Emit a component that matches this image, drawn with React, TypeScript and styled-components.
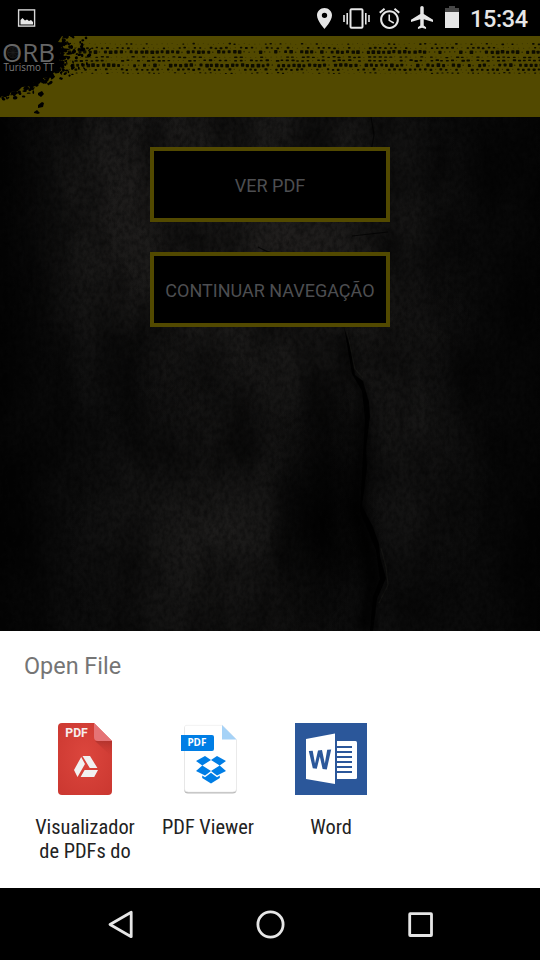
import React from "react";
import styled, { createGlobalStyle } from "styled-components";

const GlobalStyle = createGlobalStyle`
  * { box-sizing: border-box; }
  html, body { margin: 0; padding: 0; background: #000; }
`;

const Screen = styled.div`
  width: 540px;
  height: 960px;
  display: flex;
  flex-direction: column;
  overflow: hidden;
  background: #000;
  font-family: Roboto, "Liberation Sans", sans-serif;
`;

const StatusBar = styled.header`
  height: 36px;
  flex: none;
  display: flex;
  align-items: flex-start;
  justify-content: space-between;
  padding: 0 13px 0 17px;
`;

const StatusIcons = styled.div`
  display: flex;
  align-items: flex-start;
`;

const Glyph = styled.svg<{ $top: number; $right?: number }>`
  display: block;
  flex: none;
  margin-top: ${(p) => p.$top}px;
  margin-right: ${(p) => p.$right ?? 0}px;
`;

const Clock = styled.span`
  width: 57px;
  height: 36px;
  font-size: 23.5px;
  font-weight: 500;
  line-height: 38px;
  letter-spacing: -0.35px;
  color: #e6e6e6;
  white-space: nowrap;
`;

const Banner = styled.div`
  height: 81px;
  flex: none;
  background: #524900;
`;

const Art = styled.svg`
  display: block;
`;

const Stage = styled.main`
  flex: 1;
  min-height: 0;
  display: grid;
  grid-template: 514px / 540px;
  > * { grid-area: 1 / 1; }
`;

const Actions = styled.div`
  display: flex;
  flex-direction: column;
  align-items: center;
  gap: 30px;
  padding-top: 30px;
  z-index: 1;
`;

const ActionButton = styled.button`
  width: 240px;
  height: 75px;
  padding: 2px 0 0;
  border: 4px solid #524900;
  background: #000;
  color: #4d4e51;
  font: 400 18px Roboto, "Liberation Sans", sans-serif;
  white-space: nowrap;
`;

const Sheet = styled.section`
  height: 257px;
  flex: none;
  background: #fff;
  padding: 20px 23px 0;
`;

const SheetTitle = styled.h1`
  margin: 0 1px;
  height: 30px;
  font-size: 23.4px;
  line-height: 30px;
  font-weight: 400;
  color: #757575;
`;

const AppGrid = styled.div`
  display: grid;
  grid-template-columns: repeat(4, 123px);
  margin-top: 42px;
`;

const AppItem = styled.div`
  display: flex;
  flex-direction: column;
  align-items: center;
  gap: 20px;
`;

const AppLabel = styled.span`
  width: 123px;
  padding-left: 1px;
  font-family: "Roboto Condensed", Roboto, "Liberation Sans", sans-serif;
  font-stretch: 75%;
  font-size: 20.4px;
  line-height: 24px;
  text-align: center;
  color: #222;
  white-space: pre;
`;

const NavBar = styled.nav`
  height: 72px;
  flex: none;
  display: flex;
  justify-content: center;
  align-items: center;
  gap: 110px;
`;

const makeRandom = (start: number) => {
  let s = start;
  return () => {
    s = (s * 16807) % 2147483647;
    return s / 2147483647;
  };
};

type Mark = { x: number; y: number; w: number; h: number; o: number };

const TREAD_ROWS = [
  { y: 8, w: 2.6, h: 1.6, fade: 0.65, phase: 0.7 },
  { y: 12, w: 2.8, h: 1.9, fade: 0.35, phase: 2.2 },
  { y: 16, w: 3.5, h: 3.5, fade: 0.2, phase: 0 },
  { y: 21.2, w: 3.4, h: 1.5, fade: 0.3, phase: 1.6 },
  { y: 24.6, w: 3.4, h: 1.8, fade: 0.22, phase: 1.6 },
  { y: 29.4, w: 3.5, h: 3.6, fade: 0.17, phase: 3 },
  { y: 33.6, w: 2.9, h: 2.3, fade: 0.22, phase: 1 },
  { y: 37, w: 2.4, h: 1.2, fade: 0.45, phase: 2.5 },
];

const treadMarks = (): Mark[] => {
  const rnd = makeRandom(731);
  const marks: Mark[] = [];
  TREAD_ROWS.forEach((row, r) => {
    for (let x = 68 + row.phase; x < 541; x += 5.15) {
      const wave = Math.sin(x / 29 + r * 1.9) + Math.sin(x / 67 + r);
      const worn = rnd() < row.fade + (wave > 1.1 ? 0.35 : 0);
      const k = worn ? 0.45 : 0.8 + rnd() * 0.25;
      marks.push({
        x: x + (rnd() - 0.5) * 0.8,
        y: row.y - (row.h * k) / 2 + (rnd() - 0.5) * 0.8,
        w: row.w * k,
        h: row.h * k,
        o: worn ? 0.5 : 0.9,
      });
    }
  });
  return marks;
};

const splatter = () => {
  const rnd = makeRandom(97);
  const edge = [[64, 0], [60, 12], [60, 20], [61, 30], [53, 38], [42, 44], [30, 49], [17, 56], [0, 60]];
  const blobs: { x: number; y: number; rx: number; ry: number; a: number }[] = [];
  for (let i = 0; i < edge.length - 1; i++) {
    const [x1, y1] = edge[i];
    const [x2, y2] = edge[i + 1];
    for (let j = 0; j < (i < 4 ? 26 : 18); j++) {
      const t = rnd();
      const d = rnd() * rnd() * (i < 4 ? 36 : 12);
      blobs.push({
        x: x1 + (x2 - x1) * t + d * (i < 4 ? 1 : 0.4),
        y: y1 + (y2 - y1) * t + (i < 4 ? (rnd() - 0.5) * 7 : d * 0.6),
        rx: 0.6 + rnd() * 1.9,
        ry: 0.6 + rnd() * 1.2,
        a: -50 + rnd() * 60,
      });
    }
  }
  return blobs;
};

const MARKS = treadMarks();
const BLOBS = splatter();

const BannerArt = () => (
  <Art width="540" height="81" viewBox="0 0 540 81">
    {MARKS.map((m, i) => (
      <rect key={i} x={m.x} y={m.y} width={m.w} height={m.h} rx="0.7" fill="#060500" opacity={m.o} />
    ))}
    <path d="M0 0H62L58 6L67 7L61 12L71 13L60 17L66 21L59 24L65 28L58 32L62 34L53 37L55 41L43 42L44 46L34 46L32 50L22 51L18 55L11 56L9 60L3 59L0 62Z" fill="#000" />
    {BLOBS.map((b, i) => (
      <ellipse key={i} cx={b.x} cy={b.y} rx={b.rx} ry={b.ry} transform={`rotate(${b.a} ${b.x} ${b.y})`} fill="#000" />
    ))}
    <path d="M38 57l4-2 2 3-3 3-3-2zM38 69l4-3 2 1-1 4-5 1zM34 76l3-2 3 3-2 1-4-1zM60 41l3 1-1 2-3-1z" fill="#000" />
    <circle cx="13" cy="16.5" r="5.5" fill="#0c0c0c" stroke="#191919" strokeWidth="1" />
    <path d="M8 16.5H18M13 11.5V21.5M10 13.5L16 19.5M16 13.5L10 19.5" stroke="#202020" strokeWidth=".7" />
    <text x="2" y="25.8" textLength="53" lengthAdjust="spacingAndGlyphs" fontFamily="Open Sans, Noto Sans, sans-serif" fontSize="25" fill="#666">ORB</text>
    <text x="3.5" y="35.2" textLength="50.5" lengthAdjust="spacingAndGlyphs" fontFamily="Open Sans, Noto Sans, sans-serif" fontSize="10.2" fill="#7a7a7a">Turismo TT</text>
  </Art>
);

const StoneWall = () => (
  <Art width="540" height="514" viewBox="0 0 540 514" colorInterpolationFilters="sRGB">
    <defs>
      <filter id="grain" x="0" y="0" width="100%" height="100%">
        <feTurbulence type="fractalNoise" baseFrequency="0.24 0.17" numOctaves="3" seed="8" />
        <feColorMatrix values="0 0 0 0 0  0 0 0 0 0  0 0 0 0 0  2 0 0 0 -0.7" />
      </filter>
      <filter id="patches" x="0" y="0" width="100%" height="100%">
        <feTurbulence type="fractalNoise" baseFrequency="0.02 0.011" numOctaves="5" seed="21" />
        <feColorMatrix values="0 0 0 0 0  0 0 0 0 0  0 0 0 0 0  2.2 0 0 0 -0.8" />
      </filter>
      <filter id="slightBlur" x="-50%" y="-10%" width="200%" height="120%"><feGaussianBlur stdDeviation="5" /></filter>
      <radialGradient id="glowTop"><stop offset="0" stopColor="#211f1e" /><stop offset=".5" stopColor="#1c1b1a" stopOpacity=".8" /><stop offset="1" stopColor="#181716" stopOpacity="0" /></radialGradient>
      <radialGradient id="glowLow"><stop offset="0" stopColor="#1f1e1d" /><stop offset="1" stopColor="#151413" stopOpacity="0" /></radialGradient>
      <radialGradient id="shade"><stop offset="0" stopColor="#030303" /><stop offset="1" stopColor="#030303" stopOpacity="0" /></radialGradient>
      <linearGradient id="sides">
        <stop offset="0" stopColor="#000" stopOpacity=".7" /><stop offset=".16" stopColor="#000" stopOpacity="0" />
        <stop offset=".78" stopColor="#000" stopOpacity="0" /><stop offset="1" stopColor="#000" stopOpacity=".65" />
      </linearGradient>
    </defs>
    <rect width="540" height="514" fill="#0f0f0f" />
    <ellipse cx="150" cy="80" rx="150" ry="230" fill="url(#glowTop)" />
    <ellipse cx="290" cy="130" rx="190" ry="240" fill="url(#glowTop)" />
    <ellipse cx="215" cy="420" rx="150" ry="190" fill="url(#glowLow)" />
    <ellipse cx="410" cy="320" rx="90" ry="190" fill="url(#glowLow)" opacity=".6" />
    <ellipse cx="325" cy="400" rx="60" ry="150" fill="url(#shade)" />
    <rect width="540" height="514" fill="url(#sides)" />
    <rect width="540" height="514" filter="url(#patches)" opacity=".5" />
    <path d="M344 210L355 258L366 269L369 300L366 331L362 389L378 427L384 461L376 482L373 514H356L365 470L350 390L360 320L358 280L340 230Z" fill="#000" opacity=".75" filter="url(#slightBlur)" />
    <path d="M344 210L350 229L355 258L363 264L369 285L370 300L366 331L367 350L362 389L373 410L379 427L380 440L386 461L377 482L373 514H370L373 480L380 462L376 433L360 394L363 340L365 302L362 274L352 257Z" fill="#000" opacity=".85" />
    <path d="M347 214L355 252L363 261M381 431L386 450L388 468L379 486" fill="none" stroke="#1b1a18" strokeWidth="1.2" opacity=".6" />
    <path d="M371 0L374 18L371 35M302 74L304 98M258 130C271 138 280 137 293 137M352 119L388 115M302 148C316 155 326 158 331 158M320 190Q343 174 359 173" fill="none" stroke="#020202" strokeWidth="1.2" opacity=".7" />
    <rect width="540" height="514" filter="url(#grain)" opacity=".4" />
  </Art>
);

const ICON = "#e6e6e6";

const DriveIcon = () => (
  <Art width="72" height="72" viewBox="0 0 72 72">
    <defs>
      <radialGradient id="red" cx=".5" cy=".45" r=".8">
        <stop offset="0" stopColor="#dc463d" /><stop offset="1" stopColor="#c9362f" />
      </radialGradient>
      <linearGradient id="foldShade" x1="0" y1="0" x2="0" y2="1">
        <stop offset="0" stopColor="#942b27" stopOpacity=".5" /><stop offset="1" stopColor="#c9362f" stopOpacity="0" />
      </linearGradient>
    </defs>
    <path d="M13 0H45L63 18V68Q63 72 59 72H13Q9 72 9 68V4Q9 0 13 0Z" fill="url(#red)" />
    <path d="M46 18H63V34Z" fill="url(#foldShade)" />
    <path d="M45 0L63 18H49Q45 18 45 14Z" fill="#e57376" />
    <text x="16.3" y="14.3" textLength="22.5" lengthAdjust="spacingAndGlyphs" fontFamily="Roboto, sans-serif" fontWeight="700" fontSize="12" fill="#f7eeee">PDF</text>
    <path d="M32.2 34L36 41L28.5 54L25 47ZM33.5 33H41L48.4 45H40.8ZM35.6 47H49L45.2 54H31.6Z" fill="#f1f1f1" />
  </Art>
);

const DropboxIcon = () => (
  <Art width="72" height="72" viewBox="0 0 72 72">
    <path d="M15 3H50.5L64.5 17V67Q64.5 70.5 60.5 70.5H16Q12.3 70.5 12.3 67V5Q12.3 3 15 3Z" fill="#bbb" />
    <path d="M15 2.3H50.5L64.5 16.5V66Q64.5 69 60.5 69H16.5Q12.5 69 12.5 66V4Q12.5 2.3 15 2.3Z" fill="#fff" stroke="#e8e8e8" strokeWidth=".6" />
    <path d="M50 2L64.5 16.5H50Z" fill="#a5d2f7" />
    <path d="M9 12H40Q42 12 42 14V26Q42 28 40 28H9Z" fill="#007ee5" />
    <text x="15.4" y="23" textLength="19" lengthAdjust="spacingAndGlyphs" fontFamily="Open Sans, sans-serif" fontWeight="700" fontSize="9.8" fill="#fff">PDF</text>
    <path d="M33 33L39 37L30.3 42.5L24 38ZM45 33L54 38L47.7 42.5L39 37ZM24 48L30.3 42.5L39 48L33 52.5ZM39 48L47.7 42.5L54 48L45 52.5ZM30.2 52.6L33 54.2L39 49.8L45 54.2L47.8 52.6V55L39 60.5L30.2 55Z" fill="#007ee5" />
  </Art>
);

const WordIcon = () => (
  <Art width="72" height="72" viewBox="0 0 72 72">
    <rect width="72" height="72" fill="#2b579a" />
    <path d="M11 16L40 10.5V61L11 56Z" fill="#fff" />
    <path d="M42 18H60.5Q62 18 62 19.5V54.5Q62 56 60.5 56H42Z" fill="#fff" />
    <path d="M42 24H57M42 29H57M42 34H57M42 39H57M42 44H57M42 49H57" stroke="#2b579a" strokeWidth="2" />
    <path d="M13.8 28L17.7 27.7L20 40.5L23 27.4L27 27L29.8 40.4L32.2 26.8L36.2 26.4L31.8 46.4L27.6 46.1L24.8 33.5L21.8 45.7L17.8 45.3Z" fill="#2b579a" />
  </Art>
);

const APPS = [
  { label: "Visualizador\nde PDFs do", Icon: DriveIcon },
  { label: "PDF Viewer", Icon: DropboxIcon },
  { label: "Word", Icon: WordIcon },
];

export default function App() {
  return (
    <>
      <GlobalStyle />
      <Screen>
        <StatusBar>
          <Glyph $top={9} width="19" height="18" viewBox="0 0 19 18">
            <rect x="1.6" y=".9" width="16" height="16.2" fill="none" stroke="#d8d8d8" strokeWidth="1.4" />
            <path d="M3.5 15.5V11L5.5 9L8 11.5L10 10.5L12 12L14 11L16 13V15.5Z" fill={ICON} />
          </Glyph>
          <StatusIcons>
            <Glyph $top={8} $right={11} width="15" height="21" viewBox="5 2 14 20" preserveAspectRatio="none">
              <path fill={ICON} d="M12 2C8.13 2 5 5.13 5 9c0 5.25 7 13 7 13s7-7.75 7-13c0-3.87-3.13-7-7-7zm0 9.5a2.5 2.5 0 010-5 2.5 2.5 0 010 5z" />
            </Glyph>
            <Glyph $top={8} $right={9} width="27" height="21" viewBox="0 0 27 21">
              <rect x="7.5" y="1.3" width="12" height="18.4" rx="1" fill="none" stroke={ICON} strokeWidth="2" />
              <path d="M1 7V14M4.2 5V16.4M22.8 5V16.4M26 7V14" stroke={ICON} strokeWidth="1.6" />
            </Glyph>
            <Glyph $top={8} $right={11} width="21" height="21" viewBox="2 1.86 20 20.14">
              <path fill={ICON} d="M22 5.72l-4.6-3.86-1.29 1.53 4.6 3.86L22 5.72zM7.88 3.39L6.6 1.86 2 5.71l1.29 1.53 4.59-3.85zM12.5 8H11v6l4.75 2.85.75-1.23-4-2.37V8zM12 4c-4.97 0-9 4.03-9 9s4.02 9 9 9c4.97 0 9-4.03 9-9s-4.03-9-9-9zm0 16c-3.87 0-7-3.13-7-7s3.13-7 7-7 7 3.13 7 7-3.13 7-7 7z" />
            </Glyph>
            <Glyph $top={6} $right={12} width="22" height="23" viewBox="2 2 19 20" preserveAspectRatio="none">
              <path fill={ICON} d="M21 16v-2l-8-5V3.5c0-.83-.67-1.5-1.5-1.5S10 2.67 10 3.5V9l-8 5v2l8-2.5V19l-2 1.5V22l3.5-1 3.5 1v-1.5L13 19v-5.5l8 2.5z" />
            </Glyph>
            <Glyph $top={6} $right={11} width="14" height="22" viewBox="0 0 14 22">
              <path fill="#474747" d="M0 2H4V0H10V2H14V7H0Z" />
              <rect y="6" width="14" height="16" fill={ICON} />
            </Glyph>
            <Clock>15:34</Clock>
          </StatusIcons>
        </StatusBar>
        <Banner><BannerArt /></Banner>
        <Stage>
          <StoneWall />
          <Actions>
            <ActionButton>VER PDF</ActionButton>
            <ActionButton>CONTINUAR NAVEGAÇÃO</ActionButton>
          </Actions>
        </Stage>
        <Sheet>
          <SheetTitle>Open File</SheetTitle>
          <AppGrid>
            {APPS.map(({ label, Icon }) => (
              <AppItem key={label}>
                <Icon />
                <AppLabel>{label}</AppLabel>
              </AppItem>
            ))}
          </AppGrid>
        </Sheet>
        <NavBar>
          <Art width="40" height="40" viewBox="0 0 40 40">
            <path d="M10 20.5L31.2 8.3V32.7Z" fill="none" stroke={ICON} strokeWidth="2.8" strokeLinejoin="round" />
          </Art>
          <Art width="40" height="40" viewBox="0 0 40 40">
            <circle cx="20.5" cy="20.5" r="12.6" fill="none" stroke={ICON} strokeWidth="2.8" />
          </Art>
          <Art width="40" height="40" viewBox="0 0 40 40">
            <rect x="9.7" y="9.7" width="21.8" height="21.8" rx=".5" fill="none" stroke={ICON} strokeWidth="2.8" />
          </Art>
        </NavBar>
      </Screen>
    </>
  );
}
